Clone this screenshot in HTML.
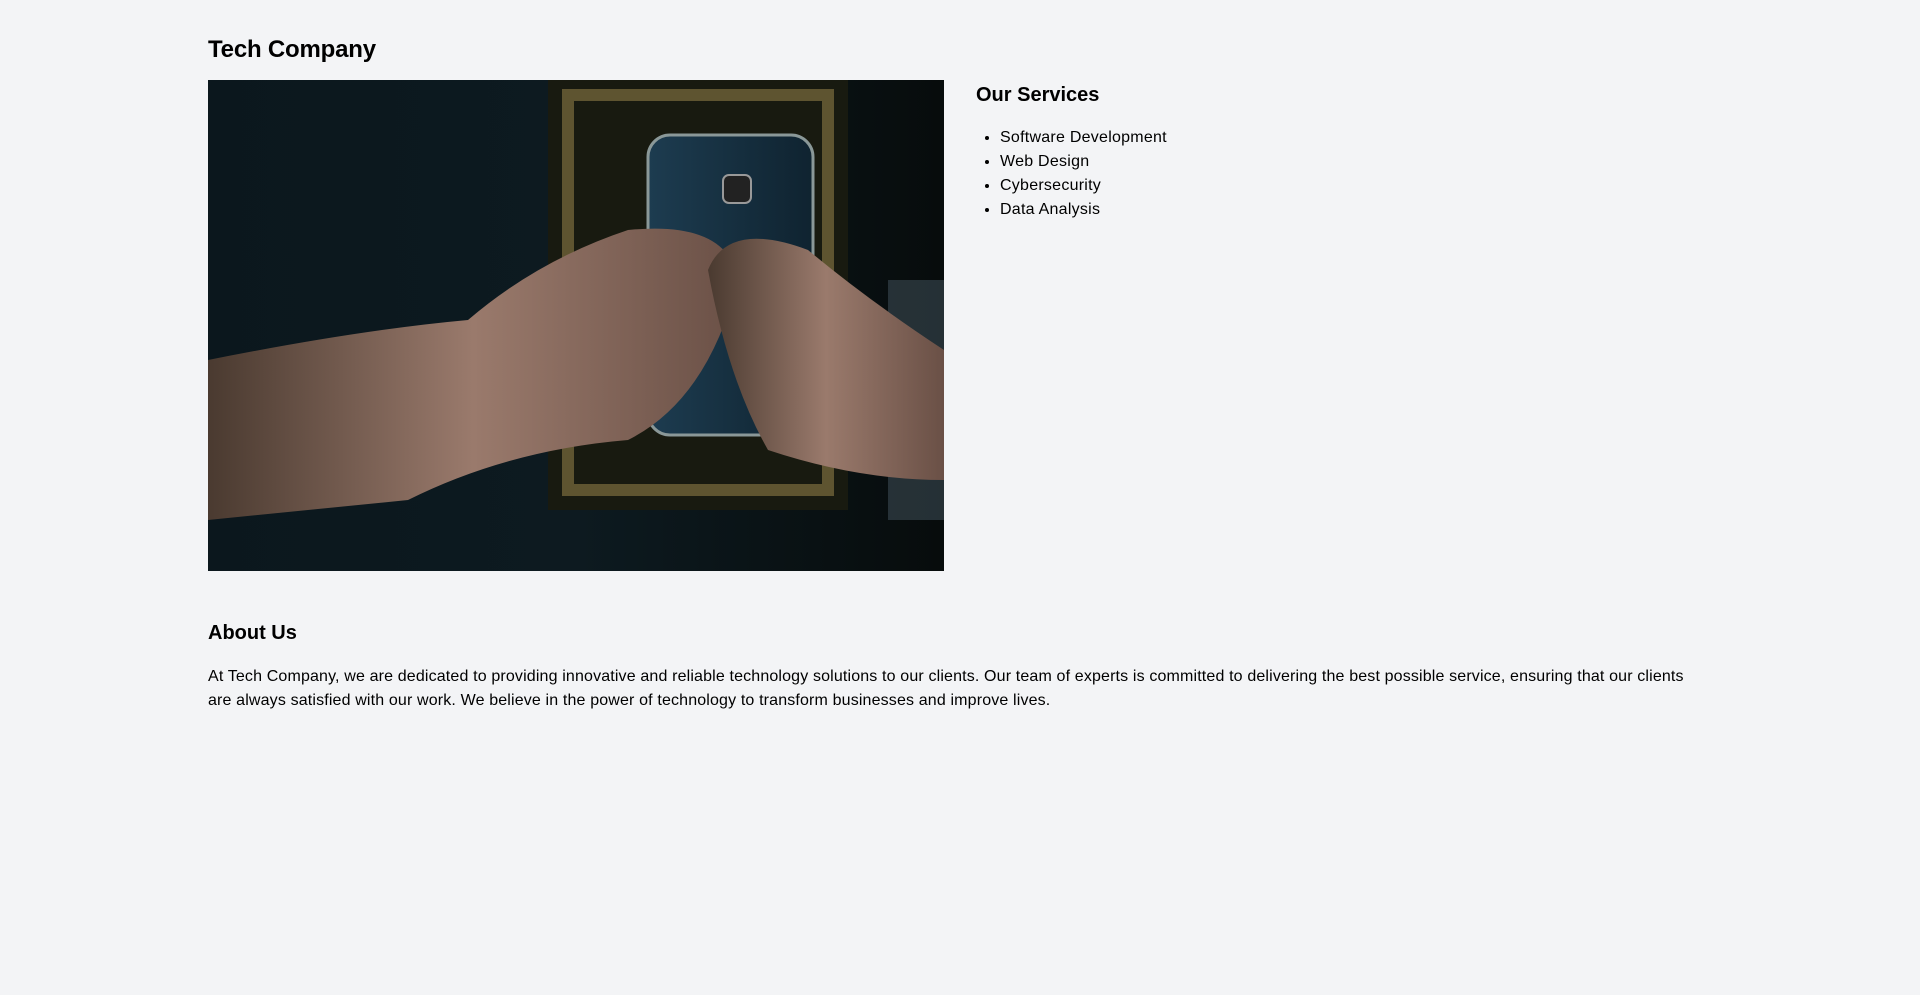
<!DOCTYPE html>
<html><head><meta charset="utf-8"><style>
*{margin:0;padding:0;box-sizing:border-box}
body{width:1920px;height:995px;background:#f3f4f6;font-family:"Liberation Sans",Arial,sans-serif;color:#000;overflow:hidden}
h1{position:absolute;left:208px;top:34px;font-size:24px;font-weight:bold;line-height:32px;letter-spacing:-0.2px}
.img{position:absolute;left:208px;top:80px;width:736px;height:491px;background:#0a1216;overflow:hidden}
h2{font-size:20px;font-weight:bold;line-height:28px}
.svc{position:absolute;left:976px;top:81px}
ul{margin-top:17px;padding-left:24px}
li{font-size:16px;line-height:24px;letter-spacing:0.25px}
.about{position:absolute;left:208px;top:619px;width:1504px}
p{margin-top:18px;font-size:16px;line-height:24px;width:1490px;letter-spacing:0.15px}
</style></head><body>
<h1>Tech Company</h1>
<div class="img">
<svg width="736" height="491" viewBox="0 0 736 491">
<defs>
<linearGradient id="bg" x1="0" x2="1"><stop offset="0" stop-color="#0b171d"/><stop offset="0.5" stop-color="#0d1a20"/><stop offset="1" stop-color="#070c0c"/></linearGradient>
<linearGradient id="ph" x1="0" x2="1"><stop offset="0" stop-color="#1d3c50"/><stop offset="1" stop-color="#0f2330"/></linearGradient>
<linearGradient id="sk" x1="0" x2="1"><stop offset="0" stop-color="#4a3a30"/><stop offset="0.5" stop-color="#9a7a6c"/><stop offset="1" stop-color="#6a5046"/></linearGradient>
</defs>
<rect width="736" height="491" fill="url(#bg)"/>
<rect x="680" y="200" width="56" height="240" fill="#3a4a52" opacity=".6"/>
<rect x="340" y="0" width="300" height="430" fill="#181a10"/>
<rect x="360" y="15" width="260" height="395" fill="none" stroke="#5e5430" stroke-width="12"/>
<rect x="440" y="55" width="165" height="300" rx="22" fill="url(#ph)" stroke="#8a9898" stroke-width="3"/>
<rect x="515" y="95" width="28" height="28" rx="6" fill="#222" stroke="#999" stroke-width="2"/>
<path d="M0 280 Q150 250 260 240 Q330 180 420 150 Q520 140 530 200 Q500 320 420 360 Q300 370 200 420 L0 440 Z" fill="url(#sk)"/>
<path d="M736 270 Q660 220 600 170 Q520 140 500 190 Q520 300 560 370 Q650 400 736 400 Z" fill="url(#sk)"/>
</svg>
</div>
<div class="svc"><h2>Our Services</h2>
<ul><li>Software Development</li><li>Web Design</li><li>Cybersecurity</li><li>Data Analysis</li></ul></div>
<div class="about"><h2>About Us</h2>
<p>At Tech Company, we are dedicated to providing innovative and reliable technology solutions to our clients. Our team of experts is committed to delivering the best possible service, ensuring that our clients are always satisfied with our work. We believe in the power of technology to transform businesses and improve lives.</p></div>
</body></html>
